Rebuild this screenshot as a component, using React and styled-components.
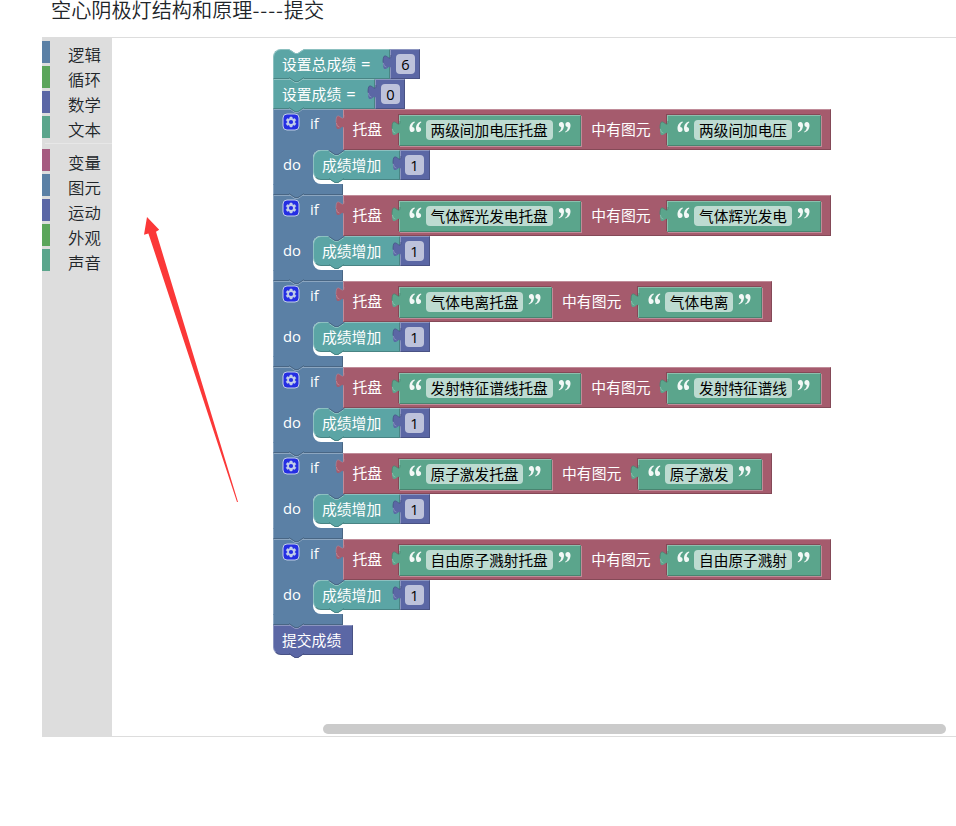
import React from "react";
import styled, { createGlobalStyle } from "styled-components";

const palette = {
  teal: { fill: "#5ba5a5", light: "#8cc0c0", dark: "#498484" },
  indigo: { fill: "#5b67a5", light: "#8c95c0", dark: "#495284" },
  blue: { fill: "#5b80a5", light: "#8ca6c0", dark: "#496684" },
  rose: { fill: "#a55b6d", light: "#c08c99", dark: "#844957" },
  green: { fill: "#5ba58c", light: "#8cc0ae", dark: "#498470" },
};

const GlobalStyle = createGlobalStyle`
  * { box-sizing: border-box; }
  body {
    margin: 0;
    background: #fff;
    color: #212529;
    font-family: "Open Sans", "Noto Sans CJK SC", sans-serif;
    overflow: hidden;
  }
`;

const Page = styled.div`
  position: relative;
  display: flex;
  flex-direction: column;
  width: 956px;
  height: 826px;
`;

const Title = styled.h1`
  display: flex;
  height: 37px;
  margin: 0 0 0 51px;
  font: 350 20.15px/20px "Noto Sans CJK SC", sans-serif;
  white-space: nowrap;
`;

const Dashes = styled.span`
  letter-spacing: 0.95px;
`;

const Editor = styled.main`
  display: flex;
  height: 700px;
  margin-left: 42px;
  border-top: 1px solid #ddd;
  border-bottom: 1px solid #ddd;
`;

const Toolbox = styled.nav`
  display: flex;
  flex-direction: column;
  gap: 3px;
  flex: 0 0 70px;
  padding-top: 3px;
  background: #ddd;
`;

const Category = styled.div`
  height: 22px;
  padding-left: 18px;
  border-left: 8px solid ${(p) => p.$color};
  font: 350 16.4px/27px "Noto Sans CJK SC", sans-serif;
  white-space: nowrap;
`;

const Separator = styled.hr`
  width: 67px;
  height: 1px;
  margin: 2px 0 2px 3px;
  border: 0;
  background: #e7e7e7;
`;

const Workspace = styled.section`
  display: flex;
  flex: 1;
  flex-direction: column;
  justify-content: space-between;
  padding: 11px 10px 2px 161px;
`;

const Scrollbar = styled.div`
  align-self: flex-end;
  width: 623px;
  height: 10px;
  border-radius: 5px;
  background: #cbcbcb;
`;

const Stack = styled.div`
  display: flex;
  flex-direction: column;
  align-items: flex-start;
  color: #fff;
  font-size: 14.8px;
  line-height: 20px;
  white-space: nowrap;
`;

const Row = styled.div`
  display: flex;
  align-items: flex-start;
`;

const Block = styled.div`
  position: relative;
  display: flex;
  align-items: center;
  flex: none;
  width: ${(p) => (p.$width ? `${p.$width}px` : "auto")};
  height: ${(p) => p.$height || 30}px;
  padding: ${(p) => p.$pad || "0 9px 0 8px"};
  border: 1px solid;
  border-color: ${(p) =>
    `${palette[p.$tone].light} ${palette[p.$tone].dark} ${palette[p.$tone].dark} ${palette[p.$tone].light}`};
  border-radius: ${(p) => p.$radius || 0};
  background: ${(p) => palette[p.$tone].fill};
`;

const InputBlock = styled(Block)`
  margin-top: 2px;
  box-shadow: -1px -1px 0 ${palette.rose.dark}, 1px 1px 0 ${palette.rose.light};
`;

const Condition = styled.div`
  display: flex;
`;

const IfHead = styled(Block)`
  align-items: flex-start;
  gap: 10px;
  border-width: 1px 0 0 1px;
`;

const IfBody = styled.div`
  display: flex;
  height: 34px;
`;

const DoLabel = styled.div`
  flex: 0 0 40px;
  padding: 4px 0 0 9px;
  border-left: 1px solid ${palette.blue.light};
  background: ${palette.blue.fill};
`;

const MouthFrame = styled.div`
  background: linear-gradient(${palette.blue.fill}, ${palette.blue.fill}) 0 0 / 12px 100% no-repeat;
`;

const Mouth = styled.div`
  display: flex;
  height: 34px;
  border-radius: 8px 0 0 8px;
  background: #fff;
`;

const IfFoot = styled.div`
  position: relative;
  width: 70px;
  height: 11px;
  border: 1px solid;
  border-color: ${palette.blue.fill} ${palette.blue.dark} ${palette.blue.dark} ${palette.blue.light};
  background: ${palette.blue.fill};
`;

const Field = styled.span`
  display: flex;
  flex: none;
  align-items: center;
  justify-content: center;
  width: ${(p) => (p.$width ? `${p.$width}px` : "auto")};
  height: 20px;
  padding: 0 ${(p) => (p.$width ? 0 : 5)}px;
  border-radius: 4px;
  background: rgba(255, 255, 255, 0.6);
  color: #000;
  font-size: 14.667px;
`;

const Equals = styled.span`
  margin-left: 5px;
  font-size: 16.5px;
`;

const Caption = styled.span`
  flex: none;
  margin-right: ${(p) => p.$after || 0}px;
  margin-left: ${(p) => p.$before || 0}px;
`;

const TabSvg = styled.svg`
  position: absolute;
  top: 4px;
  left: -9px;
  width: 10px;
  height: 17px;
`;

const NotchSvg = styled.svg`
  position: absolute;
  z-index: 2;
  left: ${(p) => p.$left}px;
  width: 17px;
  height: 7px;
  ${(p) => (p.$top !== undefined ? `top: ${p.$top}px;` : "bottom: -6px;")}
`;

const QuoteSvg = styled.svg`
  flex: none;
  width: 13px;
  height: 12px;
  margin: ${(p) => (p.$closing ? "-6px 0 0 5px" : "-6px 4px 0 0")};
  transform: ${(p) => (p.$closing ? "rotate(180deg)" : "none")};
`;

const GearSvg = styled.svg`
  flex: none;
  width: 18px;
  height: 18px;
`;

const ArrowSvg = styled.svg`
  position: absolute;
  top: 215px;
  left: 142px;
  width: 98px;
  height: 290px;
`;

function Tab({ tone }) {
  const c = palette[tone];
  return (
    <TabSvg viewBox="0 0 10 17">
      <path d="M10,1 H9 c0,10 -8,-8 -8,7.5 s8,-2.5 8,7.5 H10z" fill={c.fill} />
      <path
        d="M9,1 c0,10 -8,-8 -8,7.5"
        fill="none"
        stroke={tone === "rose" ? c.light : c.dark}
        strokeOpacity={tone === "rose" ? 0.5 : 0.8}
      />
      <path d="M1.4,9 q.2,4 3,4" fill="none" stroke={c.light} strokeOpacity=".8" />
    </TabSvg>
  );
}

function Notch({ tone, next, left = 14, top }) {
  const c = palette[tone];
  return (
    <NotchSvg viewBox="0 0 17 7" $left={left} $top={top}>
      <path d="M0,0 H17 L16,1 L10,5 H7 L1,1z" fill={c.fill} />
      {next && <path d="M1,1.5 l6,4 h3 l6,-4" fill="none" stroke={palette[next].light} />}
      <path d="M1,.5 l6,4 h3 l6,-4" fill="none" stroke={c.dark} />
    </NotchSvg>
  );
}

function TopNotch() {
  return (
    <NotchSvg viewBox="0 0 17 7" $left={14} $top={-1}>
      <path d="M1,0 l6,4 h3 l6,-4z" fill="#fff" />
      <path d="M1,.5 l6,4 h3 l6,-4" fill="none" stroke={palette.teal.light} />
    </NotchSvg>
  );
}

function NumberBlock({ value, inset = 4 }) {
  return (
    <Block $tone="indigo" $width={30} $pad={`0 0 0 ${inset}px`}>
      <Tab tone="indigo" />
      <Field $width={19}>{value}</Field>
    </Block>
  );
}

function Quote({ closing }) {
  return (
    <QuoteSvg viewBox="0 0 13 12" $closing={closing}>
      <path
        d="M5.6,.6 C3,1 .5,3.6 .5,7.4 C.5,9.8 1.5,11 3.1,11 C4.6,11 5.6,10 5.6,8.5 C5.6,7.1 4.7,6.1 3.3,6.1 C3.1,4 4.2,2.3 5.8,1.4z M12.1,.6 C9.5,1 7,3.6 7,7.4 C7,9.8 8,11 9.6,11 C11.1,11 12.1,10 12.1,8.5 C12.1,7.1 11.2,6.1 9.8,6.1 C9.6,4 10.7,2.3 12.3,1.4z"
        fill="#fff"
        fillOpacity=".92"
      />
    </QuoteSvg>
  );
}

function TextBlock({ children }) {
  return (
    <InputBlock $tone="green" $height={31} $pad="0 9.6px 0 9px">
      <Tab tone="green" />
      <Quote />
      <Field>{children}</Field>
      <Quote closing />
    </InputBlock>
  );
}

function Gear() {
  return (
    <GearSvg viewBox="-1 -1 18 18" opacity=".85">
      <rect width="16" height="16" rx="4" fill="#1c20ee" stroke="#d5dcf5" />
      <path
        fill="#d5dcf5"
        stroke="#d5dcf5"
        strokeWidth=".4"
        d="m4.203,7.296 0,1.368 -0.92,0.677 -0.11,0.41 0.9,1.559 0.41,0.11 1.043,-0.457 1.187,0.683 0.127,1.134 0.3,0.3 1.8,0 0.3,-0.299 0.127,-1.138 1.185,-0.682 1.046,0.458 0.409,-0.11 0.9,-1.559 -0.11,-0.41 -0.92,-0.677 0,-1.366 0.92,-0.677 0.11,-0.41 -0.9,-1.559 -0.409,-0.109 -1.046,0.458 -1.185,-0.682 -0.127,-1.138 -0.3,-0.299 -1.8,0 -0.3,0.3 -0.126,1.135 -1.187,0.682 -1.043,-0.457 -0.41,0.11 -0.899,1.559 0.108,0.409z"
      />
      <circle cx="8" cy="8" r="2.1" fill="#1c20ee" />
    </GearSvg>
  );
}

function IfBlock({ tray, item, next }) {
  return (
    <div>
      <Condition>
        <IfHead $tone="blue" $width={70} $height={41} $pad="3px 0 0 8px">
          <Gear />
          <Caption>if</Caption>
          <Notch tone="blue" next="teal" left={54} top={40} />
        </IfHead>
        <Block $tone="rose" $height={41} $pad="0 9.4px 1px 8.5px">
          <Tab tone="rose" />
          <Caption $after={16.4}>托盘</Caption>
          <TextBlock>{tray}</TextBlock>
          <Caption $before={10} $after={16.5}>中有图元</Caption>
          <TextBlock>{item}</TextBlock>
        </Block>
      </Condition>
      <IfBody>
        <DoLabel>do</DoLabel>
        <MouthFrame>
          <Mouth>
            <Block $tone="teal" $width={87} $radius="8px 0 0 8px">
              成绩增加
              <Notch tone="teal" />
            </Block>
            <NumberBlock value="1" />
          </Mouth>
        </MouthFrame>
      </IfBody>
      <IfFoot>
        <Notch tone="blue" next={next} />
      </IfFoot>
    </div>
  );
}

const firstGroup = [
  ["逻辑", "#5b80a5"],
  ["循环", "#5ba55b"],
  ["数学", "#5b67a5"],
  ["文本", "#5ba58c"],
];
const secondGroup = [
  ["变量", "#a55b80"],
  ["图元", "#5b80a5"],
  ["运动", "#5b67a5"],
  ["外观", "#5ba55b"],
  ["声音", "#5ba58c"],
];
const checks = [
  ["两级间加电压托盘", "两级间加电压"],
  ["气体辉光发电托盘", "气体辉光发电"],
  ["气体电离托盘", "气体电离"],
  ["发射特征谱线托盘", "发射特征谱线"],
  ["原子激发托盘", "原子激发"],
  ["自由原子溅射托盘", "自由原子溅射"],
];

const renderCategory = ([name, color]) => (
  <Category key={name} $color={color}>
    {name}
  </Category>
);

export default function App() {
  return (
    <Page>
      <GlobalStyle />
      <Title>
        空心阴极灯结构和原理<Dashes>----</Dashes>提交
      </Title>
      <Editor>
        <Toolbox>
          {firstGroup.map(renderCategory)}
          <Separator />
          {secondGroup.map(renderCategory)}
        </Toolbox>
        <Workspace>
          <Stack>
            <Row>
              <Block $tone="teal" $width={117} $radius="8px 0 0 0">
                设置总成绩<Equals>=</Equals>
                <TopNotch />
                <Notch tone="teal" next="teal" />
              </Block>
              <NumberBlock value="6" inset={5} />
            </Row>
            <Row>
              <Block $tone="teal" $width={102}>
                设置成绩<Equals>=</Equals>
                <Notch tone="teal" next="blue" />
              </Block>
              <NumberBlock value="0" inset={5} />
            </Row>
            {checks.map(([tray, item], i) => (
              <IfBlock
                key={tray}
                tray={tray}
                item={item}
                next={i === checks.length - 1 ? "indigo" : "blue"}
              />
            ))}
            <Block $tone="indigo" $width={80} $radius="0 0 0 8px">
              提交成绩
              <Notch tone="indigo" />
            </Block>
          </Stack>
          <Scrollbar />
        </Workspace>
      </Editor>
      <ArrowSvg viewBox="142 215 98 290">
        <path d="M147,217 L159.2,229.8 L156,231.8 L238,502 L237,502 L148.4,233.4 L144,234.8z" fill="#fb3838" />
      </ArrowSvg>
    </Page>
  );
}
